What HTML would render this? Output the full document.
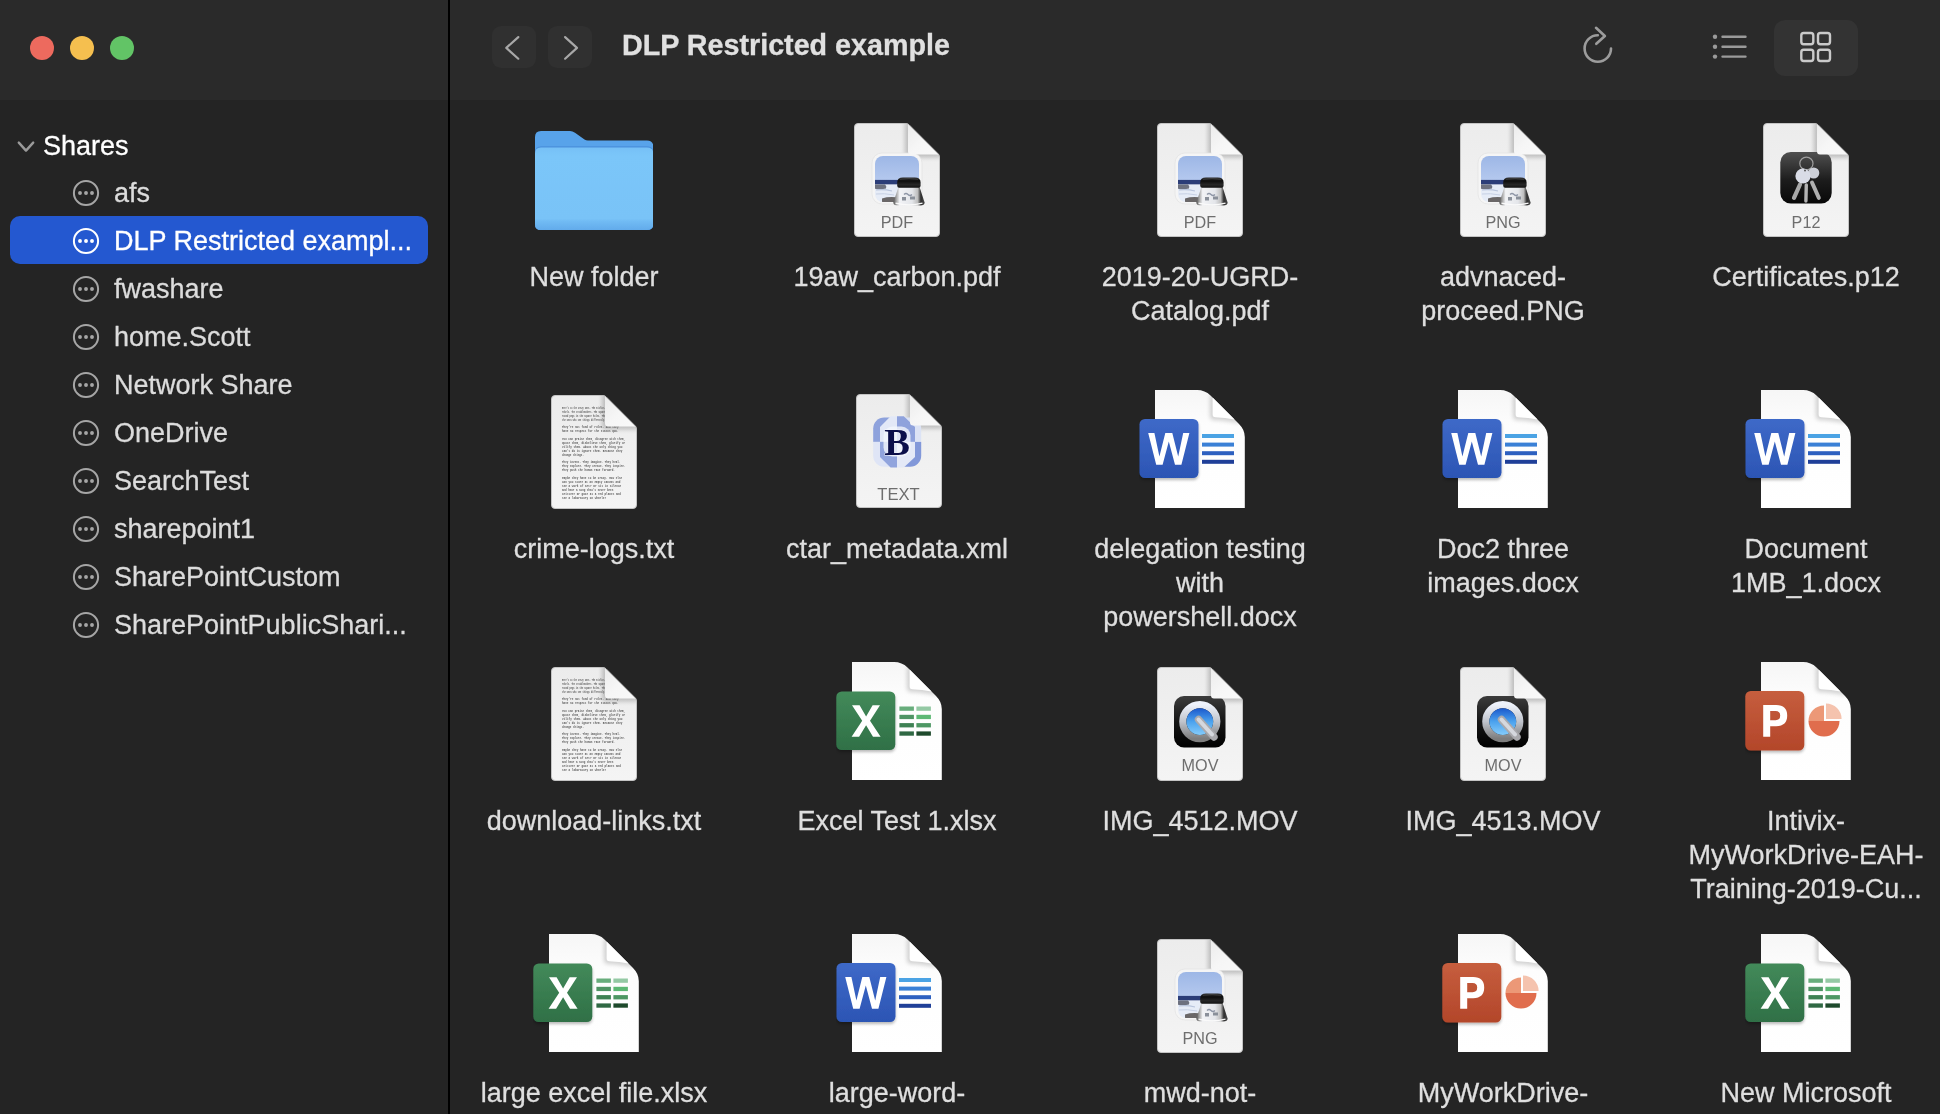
<!DOCTYPE html>
<html><head><meta charset="utf-8"><title>Finder</title>
<style>
html,body{margin:0;padding:0}
body{width:1940px;height:1114px;overflow:hidden;position:relative;background:#242424;font-family:"Liberation Sans",sans-serif;color:#dfdfdf}
.a{position:absolute}
.hdr{left:0;top:0;width:1940px;height:100px;background:#2a2a2a}
.sep{left:448px;top:0;width:2px;height:1114px;background:#000}
.tl{width:24px;height:24px;border-radius:50%;top:36px}
.side{left:114px;font-size:27px;white-space:nowrap;line-height:34px;color:#dcdcdc}
.lbl{font-size:27px;line-height:34px;text-align:center;width:290px;white-space:nowrap;color:#dfdfdf}
.ic{position:absolute;will-change:transform}
.t{will-change:transform;-webkit-text-stroke:0.3px currentColor}
</style></head><body>

<svg width="0" height="0" style="position:absolute"><defs>
<linearGradient id="apg" x1="0" y1="0" x2="0" y2="1"><stop offset="0" stop-color="#ececec"/><stop offset="1" stop-color="#f4f4f4"/></linearGradient>
<linearGradient id="apshL" x1="0" y1="0" x2="1" y2="0"><stop offset="0" stop-color="#000" stop-opacity="0"/><stop offset=".55" stop-color="#000" stop-opacity=".03"/><stop offset=".85" stop-color="#000" stop-opacity=".09"/><stop offset="1" stop-color="#000" stop-opacity=".15"/></linearGradient>
<linearGradient id="apshB" x1="0" y1="0" x2="0" y2="1"><stop offset="0" stop-color="#000" stop-opacity=".14"/><stop offset=".2" stop-color="#000" stop-opacity=".08"/><stop offset=".5" stop-color="#000" stop-opacity=".03"/><stop offset="1" stop-color="#000" stop-opacity="0"/></linearGradient>
<linearGradient id="apfold" x1="0" y1="0" x2="1" y2="1"><stop offset="0" stop-color="#ececec"/><stop offset=".5" stop-color="#f6f6f6"/><stop offset="1" stop-color="#f9f9f9"/></linearGradient>
<linearGradient id="opg" x1="0" y1="0" x2="0" y2="1"><stop offset="0" stop-color="#f6f6f6"/><stop offset=".3" stop-color="#fdfdfd"/><stop offset="1" stop-color="#ffffff"/></linearGradient>
<linearGradient id="opshL" x1="0" y1="0" x2="1" y2="0"><stop offset="0" stop-color="#000" stop-opacity="0"/><stop offset="1" stop-color="#000" stop-opacity=".10"/></linearGradient>
<linearGradient id="opshB" x1="0" y1="0" x2="0" y2="1"><stop offset="0" stop-color="#000" stop-opacity=".10"/><stop offset="1" stop-color="#000" stop-opacity="0"/></linearGradient>
<linearGradient id="gW" x1="0" y1="0" x2="0" y2="1"><stop offset="0" stop-color="#3e69c8"/><stop offset="1" stop-color="#2c55b4"/></linearGradient>
<linearGradient id="gX" x1="0" y1="0" x2="0" y2="1"><stop offset="0" stop-color="#438a5a"/><stop offset="1" stop-color="#2f7046"/></linearGradient>
<linearGradient id="gP" x1="0" y1="0" x2="0" y2="1"><stop offset="0" stop-color="#c65e3e"/><stop offset="1" stop-color="#b3462a"/></linearGradient>
<linearGradient id="gFront" x1="0" y1="0" x2="0" y2="1"><stop offset="0" stop-color="#76c0f6"/><stop offset=".1" stop-color="#7bc6f9"/><stop offset=".86" stop-color="#79c3f7"/><stop offset=".9" stop-color="#70baf3"/><stop offset="1" stop-color="#62abeb"/></linearGradient>
<linearGradient id="gSky" x1="0" y1="0" x2="0" y2="1"><stop offset="0" stop-color="#9db7e6"/><stop offset="1" stop-color="#b4c8ee"/></linearGradient>
<linearGradient id="gKey" x1="0" y1="0" x2="0" y2="1"><stop offset="0" stop-color="#505050"/><stop offset=".55" stop-color="#1c1c1c"/><stop offset="1" stop-color="#080808"/></linearGradient>
<linearGradient id="gQT" x1="0" y1="0" x2="0" y2="1"><stop offset="0" stop-color="#3c3c3c"/><stop offset=".5" stop-color="#151515"/><stop offset="1" stop-color="#000"/></linearGradient>
<linearGradient id="gRing" x1="0" y1="0" x2="0" y2="1"><stop offset="0" stop-color="#eef2fb"/><stop offset=".5" stop-color="#c0c4cc"/><stop offset="1" stop-color="#7d7d7d"/></linearGradient>
<linearGradient id="gBlue" x1="0" y1="0" x2="0" y2="1"><stop offset="0" stop-color="#1a58cc"/><stop offset=".5" stop-color="#4ba2ee"/><stop offset="1" stop-color="#85ccfa"/></linearGradient>
<linearGradient id="gInk" x1="0" y1="0" x2="1" y2="0"><stop offset="0" stop-color="#6a6a6a"/><stop offset=".15" stop-color="#dcdcdc"/><stop offset=".5" stop-color="#f4f4f4"/><stop offset=".8" stop-color="#cfcfcf"/><stop offset=".92" stop-color="#3a3a3a"/><stop offset="1" stop-color="#555"/></linearGradient>

<filter id="fblur" x="-50%" y="-50%" width="200%" height="200%"><feGaussianBlur stdDeviation="2.2"/></filter>
<clipPath id="cpAp"><path d="M4,0.5 H52 Q53.8,0.5 55.2,1.9 L84.1,30.8 Q85.5,32.2 85.5,34 V110 Q85.5,113.5 82,113.5 H4 Q0.5,113.5 0.5,110 V4 Q0.5,0.5 4,0.5Z"/></clipPath>
<g id="apage">
 <path d="M4,0.5 H52 Q53.8,0.5 55.2,1.9 L84.1,30.8 Q85.5,32.2 85.5,34 V110 Q85.5,113.5 82,113.5 H4 Q0.5,113.5 0.5,110 V4 Q0.5,0.5 4,0.5Z" fill="url(#apg)" stroke="#c4c4c4" stroke-width="1"/>
 <g clip-path="url(#cpAp)"><path d="M54,-3 L89,32 V33.4 H56 Q52,33.4 52,29.4 V-3Z" fill="#000" opacity=".2" filter="url(#fblur)" transform="translate(-1,1.2)"/></g>
</g>
<g id="afold">
 <path d="M54,1.2 L85.2,32.2 V31.4 H57 Q54,31.4 54,28.4Z" fill="url(#apfold)"/>
</g>

<filter id="bsh" x="-20%" y="-20%" width="140%" height="150%"><feGaussianBlur in="SourceAlpha" stdDeviation="1.6"/><feOffset dy="1.8"/><feComponentTransfer><feFuncA type="linear" slope=".28"/></feComponentTransfer><feMerge><feMergeNode/><feMergeNode in="SourceGraphic"/></feMerge></filter>
<clipPath id="cpOp"><path d="M0,0 H42 Q50,0 55.5,5.5 L84,34 Q89.8,39.8 89.8,47 V118 H0Z"/></clipPath>
<g id="opage">
 <path d="M0,0 H42 Q50,0 55.5,5.5 L84,34 Q89.8,39.8 89.8,47 V118 H0Z" fill="url(#opg)"/>
 <g clip-path="url(#cpOp)"><path d="M57.6,3 L86,31 V32 Q70,28.5 60.5,28.5 Q56,28.5 56,25 V3Z" fill="#000" opacity=".17" filter="url(#fblur)" transform="translate(-1,1.5)"/></g>
 <path d="M57.6,7.6 V24.6 Q57.6,27.1 60.2,27.2 Q70,27.6 79.6,29.6Z" fill="#ffffff"/>
</g>

<g id="b_word">
 <rect x="-15.5" y="29" width="59" height="59" rx="5.5" fill="url(#gW)" filter="url(#bsh)"/>
 <path d="M-6.8,43 H-0.6 L4.4,66.5 L10.3,43 H17.3 L23.2,66.5 L28.2,43 H34.4 L26.4,74.8 H20 L13.8,51.5 L7.6,74.8 H1.2Z" fill="#fff"/>
 <rect x="47" y="44" width="32" height="4" fill="#4ba3e4"/>
 <rect x="47" y="52.6" width="32" height="4" fill="#3a80d6"/>
 <rect x="47" y="61.2" width="32" height="4" fill="#2d60c0"/>
 <rect x="47" y="69.8" width="32" height="4" fill="#1f3f98"/>
</g>

<g id="b_excel">
 <rect x="-15.7" y="29.5" width="59" height="58.5" rx="5.5" fill="url(#gX)" filter="url(#bsh)"/>
 <path d="M0,43.3 H7.6 L14.1,54.6 L20.6,43.3 H28 L18,58.8 L28.6,74.7 H21 L14.1,63.3 L7.1,74.7 H-0.4 L10.2,58.8Z" fill="#fff"/>
 <rect x="47.4" y="44.5" width="14.5" height="4.3" fill="#68ad7c"/>
 <rect x="64.4" y="44.5" width="14.5" height="4.3" fill="#94c9a4"/>
 <rect x="47.4" y="52.8" width="14.5" height="4.3" fill="#4f9464"/>
 <rect x="64.4" y="52.8" width="14.5" height="4.3" fill="#5db874"/>
 <rect x="47.4" y="61.1" width="14.5" height="4.3" fill="#3e8153"/>
 <rect x="64.4" y="61.1" width="14.5" height="4.3" fill="#4d9763"/>
 <rect x="47.4" y="69.4" width="14.5" height="4.3" fill="#2f6843"/>
 <rect x="64.4" y="69.4" width="14.5" height="4.3" fill="#1e4a2c"/>
</g>

<g id="b_ppt">
 <rect x="-15.7" y="29" width="59" height="59.5" rx="5.5" fill="url(#gP)" filter="url(#bsh)"/>
 <path fill-rule="evenodd" d="M2.2,43 H15.2 Q26.2,43 26.2,53.6 Q26.2,64.2 15.2,64.2 H9.2 V74.7 H2.2Z M9.2,49 V58.2 H14.6 Q19.2,58.2 19.2,53.6 Q19.2,49 14.6,49Z" fill="#fff"/>
 <path d="M63,59 H47.5 A15.5,15.5 0 0 1 63,43.5Z" fill="#ec9877"/>
 <path d="M47.5,59 H78.5 A15.5,15.5 0 0 1 47.5,59Z" fill="#e06d4d"/>
 <path d="M65,57 V41.4 A15.6,15.6 0 0 1 80.6,57Z" fill="#f5c3ae"/>
</g>

<g id="preview">
 <rect x="18" y="30" width="50" height="51" rx="10" fill="#f5f5f5" stroke="#e2e2e2" stroke-width=".7"/>
 <clipPath id="cpPhoto"><rect x="21" y="33" width="44" height="46" rx="8"/></clipPath>
 <g clip-path="url(#cpPhoto)">
  <rect x="21" y="33" width="44" height="24" fill="url(#gSky)"/>
  <rect x="21" y="56.9" width="44" height="4.8" fill="#2b3d78"/>
  <rect x="21" y="61.5" width="44" height="18" fill="#e6ecf7"/>
  <path d="M21,61.5 H31 Q33,63 32,65.5 Q27,67 21,65.8Z" fill="#4f5360" opacity=".8"/>
  <path d="M22,67 Q30,66 38,68" stroke="#b8c4dc" stroke-width="1.2" fill="none"/>
  <path d="M22,71 Q30,70 40,72" stroke="#c6d0e4" stroke-width="1" fill="none"/>
  <path d="M28,75.5 Q36,72.8 47,75 V79.5 H28Z" fill="#54504f" opacity=".85"/>
 </g>
 <defs>
  <linearGradient id="gGlass" x1="0" y1="0" x2="1" y2="0"><stop offset="0" stop-color="#505050"/><stop offset=".08" stop-color="#9a9a9a"/><stop offset=".2" stop-color="#f2f3f6"/><stop offset=".6" stop-color="#e4e6ea"/><stop offset=".78" stop-color="#bdbdbd"/><stop offset=".88" stop-color="#2e2e2e"/><stop offset="1" stop-color="#4a4a4a"/></linearGradient>
  <linearGradient id="gLid" x1="0" y1="0" x2="0" y2="1"><stop offset="0" stop-color="#2a2a2a"/><stop offset=".35" stop-color="#0e0e0e"/><stop offset=".7" stop-color="#262626"/><stop offset="1" stop-color="#111"/></linearGradient>
 </defs>
 <path d="M44.6,63.5 H65.4 L70.6,79.6 Q70.8,82.6 66,82.6 H44 Q39.2,82.6 39.4,79.6Z" fill="url(#gGlass)"/>
 <path d="M41.5,80.2 Q55,83.5 68.5,80.2" fill="none" stroke="#fafafa" stroke-width="1.3"/>
 <path d="M50,71.5 q2,-2 4,0 q2,2 4,0" fill="none" stroke="#8e96a6" stroke-width="1.2"/>
 <path d="M48,74 h4 v3.5 h-4z M56,73.5 h5 v3 h-5z" fill="#8a909a"/>
 <path d="M43.2,59.5 Q43.2,54.4 49,54.4 H60.8 Q66.6,54.4 66.6,59.5 V62.8 Q66.6,64.8 64.6,64.8 H45.2 Q43.2,64.8 43.2,62.8Z" fill="url(#gLid)"/>
 <path d="M46,56.2 Q55,55 64,56.2" fill="none" stroke="#4a4a4a" stroke-width=".8"/>
</g>

<g id="b_pdf"><use href="#preview"/><text x="43" y="104.8" text-anchor="middle" font-family="Liberation Sans" font-size="16.2" fill="#6e6e6e">PDF</text></g>
<g id="b_png"><use href="#preview"/><text x="43" y="104.8" text-anchor="middle" font-family="Liberation Sans" font-size="16.2" fill="#6e6e6e">PNG</text></g>

<g id="b_p12">
 <rect x="17.3" y="29" width="51.4" height="51.5" rx="10.5" fill="url(#gKey)"/>
 <ellipse cx="43.4" cy="40.5" rx="6.6" ry="6.4" fill="none" stroke="#a0a0a0" stroke-width="1.2"/>
 <path d="M37,61.5 L31,74.8" stroke="#a8a8a8" stroke-width="4.2" stroke-linecap="round"/>
 <path d="M43.3,62 L42.9,78" stroke="#b3b3b3" stroke-width="3.4" stroke-linecap="round"/>
 <path d="M49,59.5 L55.8,74.8" stroke="#b0b0b0" stroke-width="4" stroke-linecap="round"/>
 <circle cx="50.7" cy="50" r="5.6" fill="#cdd0d8"/>
 <circle cx="40" cy="53" r="7.6" fill="#d9dce6"/>
 <circle cx="42" cy="47.5" r="1" fill="#555"/>
 <text x="43" y="104.8" text-anchor="middle" font-family="Liberation Sans" font-size="16.2" fill="#6e6e6e">P12</text>
</g>

<g id="b_mov">
 <rect x="17" y="29" width="51.5" height="51.4" rx="10" fill="url(#gQT)"/>
 <circle cx="42.8" cy="54.6" r="17" fill="none" stroke="url(#gRing)" stroke-width="7.2"/>
 <circle cx="42.8" cy="54.6" r="13.4" fill="url(#gBlue)"/>
 <path d="M41.5,52.5 L57,70" stroke="#a9a9ad" stroke-width="7.4" stroke-linecap="round"/>
 <path d="M41.5,52.5 L55,67.5" stroke="#d5d8de" stroke-width="4" stroke-linecap="round"/>
 <text x="43" y="104" text-anchor="middle" font-family="Liberation Sans" font-size="16.2" fill="#6e6e6e">MOV</text>
</g>

<g id="b_xml">
 <clipPath id="cpBB"><rect x="17.2" y="23.5" width="48" height="49.2" rx="11"/></clipPath>
 <clipPath id="cpOct"><path d="M34.6,22.3 H47.8 L59,33 V63 L47.8,73.6 H34.6 L24,63 V33Z"/></clipPath>
 <g clip-path="url(#cpBB)">
  <rect x="15" y="20" width="26" height="27.9" fill="#8ea2dc"/>
  <rect x="41" y="20" width="26" height="27.9" fill="#dce3f5"/>
  <rect x="15" y="47.9" width="26" height="27" fill="#dfe5f6"/>
  <rect x="41" y="47.9" width="26" height="27" fill="#8298d9"/>
 </g>
 <g clip-path="url(#cpOct)">
  <rect x="20" y="20" width="21" height="27.9" fill="#e2e8f7"/>
  <rect x="41" y="20" width="21" height="27.9" fill="#8fa2dc"/>
  <rect x="20" y="47.9" width="21" height="27" fill="#91a4dd"/>
  <rect x="41" y="47.9" width="21" height="27" fill="#e4e9f7"/>
 </g>
 <rect x="27.5" y="32.5" width="27" height="30" rx="9" fill="#f3f6fc" opacity=".8"/>
 <text x="41" y="60.8" text-anchor="middle" font-family="Liberation Serif" font-weight="bold" font-size="38.5" fill="#0b0f4a" stroke="#f4f6fc" stroke-width=".8" paint-order="stroke">B</text>
 <text x="42.5" y="106.4" text-anchor="middle" font-family="Liberation Sans" font-size="16.6" fill="#6e6e6e">TEXT</text>
</g>

<g id="b_txt" font-family="Liberation Mono" font-size="3.4" fill="#5c5c5c" font-weight="bold">
 <text x="11" y="13.8" textLength="43.5" lengthAdjust="spacingAndGlyphs">Here&#39;s to the crazy ones. The misfits.</text>
 <text x="11" y="17.6" textLength="43.5" lengthAdjust="spacingAndGlyphs">rebels. The troublemakers. The square</text>
 <text x="11" y="21.6" textLength="43.5" lengthAdjust="spacingAndGlyphs">round pegs in the square holes. The</text>
 <text x="11" y="25.5" textLength="43.5" lengthAdjust="spacingAndGlyphs">the ones who see things differently.</text>
 <text x="11" y="33.3" textLength="56.6" lengthAdjust="spacingAndGlyphs">They&#39;re not fond of rules. And they</text>
 <text x="11" y="37.3" textLength="56.6" lengthAdjust="spacingAndGlyphs">have no respect for the status quo.</text>
 <text x="11" y="44.9" textLength="63.2" lengthAdjust="spacingAndGlyphs">You can praise them, disagree with them,</text>
 <text x="11" y="48.8" textLength="63.2" lengthAdjust="spacingAndGlyphs">quote them, disbelieve them, glorify or</text>
 <text x="11" y="52.8" textLength="60.4" lengthAdjust="spacingAndGlyphs">vilify them. About the only thing you</text>
 <text x="11" y="56.7" textLength="60.4" lengthAdjust="spacingAndGlyphs">can&#39;t do is ignore them. Because they</text>
 <text x="11" y="60.6" textLength="22.0" lengthAdjust="spacingAndGlyphs">change things.</text>
 <text x="11" y="68.3" textLength="58.5" lengthAdjust="spacingAndGlyphs">They invent. They imagine. They heal.</text>
 <text x="11" y="72.3" textLength="63.5" lengthAdjust="spacingAndGlyphs">They explore. They create. They inspire.</text>
 <text x="11" y="76.2" textLength="52.9" lengthAdjust="spacingAndGlyphs">They push the human race forward.</text>
 <text x="11" y="83.9" textLength="60.2" lengthAdjust="spacingAndGlyphs">Maybe they have to be crazy. How else</text>
 <text x="11" y="87.8" textLength="58.3" lengthAdjust="spacingAndGlyphs">can you stare at an empty canvas and</text>
 <text x="11" y="91.8" textLength="59.2" lengthAdjust="spacingAndGlyphs">see a work of art? Or sit in silence</text>
 <text x="11" y="95.6" textLength="51.2" lengthAdjust="spacingAndGlyphs">and hear a song that&#39;s never been</text>
 <text x="11" y="99.6" textLength="58.8" lengthAdjust="spacingAndGlyphs">written? Or gaze at a red planet and</text>
 <text x="11" y="103.5" textLength="44.1" lengthAdjust="spacingAndGlyphs">see a laboratory on wheels?</text>
</g>

<g id="folder">
 <path d="M6,0 H35 Q37.5,0 40,1.8 L49.5,8.6 Q51,9.5 53,9.5 H112 Q118.3,9.5 118.3,15.8 V93 Q118.3,99 112,99 H6 Q0,99 0,93 V6 Q0,0 6,0Z" fill="#58a3ea"/>
 <path d="M6,15.2 H112 Q118.3,15.2 118.3,21.2 V93 Q118.3,99 112,99 H6 Q0,99 0,93 V21.2 Q0,15.2 6,15.2Z" fill="#4a90dc"/>
 <path d="M6,16.6 H112 Q118.3,16.6 118.3,22.6 V93 Q118.3,99 112,99 H6 Q0,99 0,93 V22.6 Q0,16.6 6,16.6Z" fill="url(#gFront)"/>
</g>
</defs>
</svg>
<div class="a hdr"></div>
<div class="a sep"></div>
<div class="a tl" style="left:30px;background:#ed6a5e"></div>
<div class="a tl" style="left:70px;background:#f5bf4f"></div>
<div class="a tl" style="left:110px;background:#62c466"></div>
<div class="a" style="left:492px;top:26px;width:44px;height:42px;border-radius:9px;background:#303030"></div>
<div class="a" style="left:548px;top:26px;width:44px;height:42px;border-radius:9px;background:#303030"></div>
<svg class="a" style="left:492px;top:26px" width="44" height="42"><path d="M26.3,11.1 L14.3,21.9 L26.3,32.7" fill="none" stroke="#a8a8a8" stroke-width="2.2" stroke-linecap="round" stroke-linejoin="round"/></svg>
<svg class="a" style="left:548px;top:26px" width="44" height="42"><path d="M17.1,11.1 L29,21.9 L17.1,32.7" fill="none" stroke="#a8a8a8" stroke-width="2.2" stroke-linecap="round" stroke-linejoin="round"/></svg>
<div class="a t" style="left:622px;top:27.5px;font-size:28.7px;font-weight:bold;color:#e0e0e0;white-space:nowrap;line-height:34px;-webkit-text-stroke:0.3px #e0e0e0">DLP Restricted example</div>
<svg class="a" style="left:1576px;top:22px" width="44" height="46"><path d="M21.8,13.3 A13.2,13.2 0 1 0 35,26.5" fill="none" stroke="#9c9c9c" stroke-width="2.6" stroke-linecap="round"/><path d="M20,5.8 L28.9,14 L20.3,21.8" fill="none" stroke="#9c9c9c" stroke-width="2.6" stroke-linecap="round" stroke-linejoin="round"/></svg>
<svg class="a" style="left:1708px;top:28px" width="44" height="36"><circle cx="7" cy="8.8" r="2.2" fill="#9a9a9a"/><circle cx="7" cy="18.7" r="2.2" fill="#9a9a9a"/><circle cx="7" cy="28.6" r="2.2" fill="#9a9a9a"/><path d="M14.5,8.8 H37.5 M14.5,18.7 H37.5 M14.5,28.6 H37.5" stroke="#9a9a9a" stroke-width="2.4" stroke-linecap="round"/></svg>
<div class="a" style="left:1774px;top:20px;width:84px;height:56px;border-radius:11px;background:#333333"></div>
<svg class="a" style="left:1796px;top:28px" width="40" height="40"><rect x="5.3" y="5" width="12" height="11.2" rx="2.4" fill="none" stroke="#cacaca" stroke-width="2.4"/><rect x="22" y="5" width="12" height="11.2" rx="2.4" fill="none" stroke="#cacaca" stroke-width="2.4"/><rect x="5.3" y="21.8" width="12" height="11.2" rx="2.4" fill="none" stroke="#cacaca" stroke-width="2.4"/><rect x="22" y="21.8" width="12" height="11.2" rx="2.4" fill="none" stroke="#cacaca" stroke-width="2.4"/></svg>
<svg class="a" style="left:12px;top:132px" width="28" height="24"><path d="M6.8,10.6 L14,18.6 L21.2,10.6" fill="none" stroke="#9a9a9a" stroke-width="2.4" stroke-linecap="round" stroke-linejoin="round"/></svg>
<div class="a side t" style="left:43px;top:129px;color:#ffffff">Shares</div>
<div class="a" style="left:10px;top:216px;width:418px;height:48px;border-radius:10px;background:#2458d0"></div>
<svg class="a" style="left:70px;top:177px" width="32" height="32"><circle cx="16" cy="16" r="12.1" fill="none" stroke="#a6a6a6" stroke-width="2"/><circle cx="10" cy="16" r="1.95" fill="#a6a6a6"/><circle cx="16" cy="16" r="1.95" fill="#a6a6a6"/><circle cx="22" cy="16" r="1.95" fill="#a6a6a6"/></svg>
<div class="a side t" style="top:175.5px;color:#dcdcdc">afs</div>
<svg class="a" style="left:70px;top:225px" width="32" height="32"><circle cx="16" cy="16" r="12.1" fill="none" stroke="#ffffff" stroke-width="2"/><circle cx="10" cy="16" r="1.95" fill="#ffffff"/><circle cx="16" cy="16" r="1.95" fill="#ffffff"/><circle cx="22" cy="16" r="1.95" fill="#ffffff"/></svg>
<div class="a side t" style="top:223.5px;color:#ffffff">DLP Restricted exampl...</div>
<svg class="a" style="left:70px;top:273px" width="32" height="32"><circle cx="16" cy="16" r="12.1" fill="none" stroke="#a6a6a6" stroke-width="2"/><circle cx="10" cy="16" r="1.95" fill="#a6a6a6"/><circle cx="16" cy="16" r="1.95" fill="#a6a6a6"/><circle cx="22" cy="16" r="1.95" fill="#a6a6a6"/></svg>
<div class="a side t" style="top:271.5px;color:#dcdcdc">fwashare</div>
<svg class="a" style="left:70px;top:321px" width="32" height="32"><circle cx="16" cy="16" r="12.1" fill="none" stroke="#a6a6a6" stroke-width="2"/><circle cx="10" cy="16" r="1.95" fill="#a6a6a6"/><circle cx="16" cy="16" r="1.95" fill="#a6a6a6"/><circle cx="22" cy="16" r="1.95" fill="#a6a6a6"/></svg>
<div class="a side t" style="top:319.5px;color:#dcdcdc">home.Scott</div>
<svg class="a" style="left:70px;top:369px" width="32" height="32"><circle cx="16" cy="16" r="12.1" fill="none" stroke="#a6a6a6" stroke-width="2"/><circle cx="10" cy="16" r="1.95" fill="#a6a6a6"/><circle cx="16" cy="16" r="1.95" fill="#a6a6a6"/><circle cx="22" cy="16" r="1.95" fill="#a6a6a6"/></svg>
<div class="a side t" style="top:367.5px;color:#dcdcdc">Network Share</div>
<svg class="a" style="left:70px;top:417px" width="32" height="32"><circle cx="16" cy="16" r="12.1" fill="none" stroke="#a6a6a6" stroke-width="2"/><circle cx="10" cy="16" r="1.95" fill="#a6a6a6"/><circle cx="16" cy="16" r="1.95" fill="#a6a6a6"/><circle cx="22" cy="16" r="1.95" fill="#a6a6a6"/></svg>
<div class="a side t" style="top:415.5px;color:#dcdcdc">OneDrive</div>
<svg class="a" style="left:70px;top:465px" width="32" height="32"><circle cx="16" cy="16" r="12.1" fill="none" stroke="#a6a6a6" stroke-width="2"/><circle cx="10" cy="16" r="1.95" fill="#a6a6a6"/><circle cx="16" cy="16" r="1.95" fill="#a6a6a6"/><circle cx="22" cy="16" r="1.95" fill="#a6a6a6"/></svg>
<div class="a side t" style="top:463.5px;color:#dcdcdc">SearchTest</div>
<svg class="a" style="left:70px;top:513px" width="32" height="32"><circle cx="16" cy="16" r="12.1" fill="none" stroke="#a6a6a6" stroke-width="2"/><circle cx="10" cy="16" r="1.95" fill="#a6a6a6"/><circle cx="16" cy="16" r="1.95" fill="#a6a6a6"/><circle cx="22" cy="16" r="1.95" fill="#a6a6a6"/></svg>
<div class="a side t" style="top:511.5px;color:#dcdcdc">sharepoint1</div>
<svg class="a" style="left:70px;top:561px" width="32" height="32"><circle cx="16" cy="16" r="12.1" fill="none" stroke="#a6a6a6" stroke-width="2"/><circle cx="10" cy="16" r="1.95" fill="#a6a6a6"/><circle cx="16" cy="16" r="1.95" fill="#a6a6a6"/><circle cx="22" cy="16" r="1.95" fill="#a6a6a6"/></svg>
<div class="a side t" style="top:559.5px;color:#dcdcdc">SharePointCustom</div>
<svg class="a" style="left:70px;top:609px" width="32" height="32"><circle cx="16" cy="16" r="12.1" fill="none" stroke="#a6a6a6" stroke-width="2"/><circle cx="10" cy="16" r="1.95" fill="#a6a6a6"/><circle cx="16" cy="16" r="1.95" fill="#a6a6a6"/><circle cx="22" cy="16" r="1.95" fill="#a6a6a6"/></svg>
<div class="a side t" style="top:607.5px;color:#dcdcdc">SharePointPublicShari...</div>
<svg class="ic" style="left:535px;top:131px" width="118" height="99"><use href="#folder"/></svg>
<div class="a lbl t" style="left:449px;top:260px">New folder</div>
<svg class="ic" style="left:854px;top:123px" width="86" height="114"><use href="#apage"/><use href="#b_pdf"/><use href="#afold"/></svg>
<div class="a lbl t" style="left:752px;top:260px">19aw_carbon.pdf</div>
<svg class="ic" style="left:1157px;top:123px" width="86" height="114"><use href="#apage"/><use href="#b_pdf"/><use href="#afold"/></svg>
<div class="a lbl t" style="left:1055px;top:260px">2019-20-UGRD-</div>
<div class="a lbl t" style="left:1055px;top:294px">Catalog.pdf</div>
<svg class="ic" style="left:1460px;top:123px" width="86" height="114"><use href="#apage"/><use href="#b_png"/><use href="#afold"/></svg>
<div class="a lbl t" style="left:1358px;top:260px">advnaced-</div>
<div class="a lbl t" style="left:1358px;top:294px">proceed.PNG</div>
<svg class="ic" style="left:1763px;top:123px" width="86" height="114"><use href="#apage"/><use href="#b_p12"/><use href="#afold"/></svg>
<div class="a lbl t" style="left:1661px;top:260px">Certificates.p12</div>
<svg class="ic" style="left:551px;top:395px" width="86" height="114"><use href="#apage"/><use href="#b_txt"/><use href="#afold"/></svg>
<div class="a lbl t" style="left:449px;top:532px">crime-logs.txt</div>
<svg class="ic" style="left:856px;top:394px" width="86" height="114"><use href="#apage"/><use href="#b_xml"/><use href="#afold"/></svg>
<div class="a lbl t" style="left:752px;top:532px">ctar_metadata.xml</div>
<svg class="ic" style="left:1139px;top:390px" width="106" height="118"><g transform="translate(16,0)"><use href="#opage"/><use href="#b_word"/></g></svg>
<div class="a lbl t" style="left:1055px;top:532px">delegation testing</div>
<div class="a lbl t" style="left:1055px;top:566px">with</div>
<div class="a lbl t" style="left:1055px;top:600px">powershell.docx</div>
<svg class="ic" style="left:1442px;top:390px" width="106" height="118"><g transform="translate(16,0)"><use href="#opage"/><use href="#b_word"/></g></svg>
<div class="a lbl t" style="left:1358px;top:532px">Doc2 three</div>
<div class="a lbl t" style="left:1358px;top:566px">images.docx</div>
<svg class="ic" style="left:1745px;top:390px" width="106" height="118"><g transform="translate(16,0)"><use href="#opage"/><use href="#b_word"/></g></svg>
<div class="a lbl t" style="left:1661px;top:532px">Document</div>
<div class="a lbl t" style="left:1661px;top:566px">1MB_1.docx</div>
<svg class="ic" style="left:551px;top:667px" width="86" height="114"><use href="#apage"/><use href="#b_txt"/><use href="#afold"/></svg>
<div class="a lbl t" style="left:449px;top:804px">download-links.txt</div>
<svg class="ic" style="left:836px;top:662px" width="106" height="118"><g transform="translate(16,0)"><use href="#opage"/><use href="#b_excel"/></g></svg>
<div class="a lbl t" style="left:752px;top:804px">Excel Test 1.xlsx</div>
<svg class="ic" style="left:1157px;top:667px" width="86" height="114"><use href="#apage"/><use href="#b_mov"/><use href="#afold"/></svg>
<div class="a lbl t" style="left:1055px;top:804px">IMG_4512.MOV</div>
<svg class="ic" style="left:1460px;top:667px" width="86" height="114"><use href="#apage"/><use href="#b_mov"/><use href="#afold"/></svg>
<div class="a lbl t" style="left:1358px;top:804px">IMG_4513.MOV</div>
<svg class="ic" style="left:1745px;top:662px" width="106" height="118"><g transform="translate(16,0)"><use href="#opage"/><use href="#b_ppt"/></g></svg>
<div class="a lbl t" style="left:1661px;top:804px">Intivix-</div>
<div class="a lbl t" style="left:1661px;top:838px">MyWorkDrive-EAH-</div>
<div class="a lbl t" style="left:1661px;top:872px">Training-2019-Cu...</div>
<svg class="ic" style="left:533px;top:934px" width="106" height="118"><g transform="translate(16,0)"><use href="#opage"/><use href="#b_excel"/></g></svg>
<div class="a lbl t" style="left:449px;top:1076px">large excel file.xlsx</div>
<svg class="ic" style="left:836px;top:934px" width="106" height="118"><g transform="translate(16,0)"><use href="#opage"/><use href="#b_word"/></g></svg>
<div class="a lbl t" style="left:752px;top:1076px">large-word-</div>
<svg class="ic" style="left:1157px;top:939px" width="86" height="114"><use href="#apage"/><use href="#b_png"/><use href="#afold"/></svg>
<div class="a lbl t" style="left:1055px;top:1076px">mwd-not-</div>
<svg class="ic" style="left:1442px;top:934px" width="106" height="118"><g transform="translate(16,0)"><use href="#opage"/><use href="#b_ppt"/></g></svg>
<div class="a lbl t" style="left:1358px;top:1076px">MyWorkDrive-</div>
<svg class="ic" style="left:1745px;top:934px" width="106" height="118"><g transform="translate(16,0)"><use href="#opage"/><use href="#b_excel"/></g></svg>
<div class="a lbl t" style="left:1661px;top:1076px">New Microsoft</div>
</body></html>
